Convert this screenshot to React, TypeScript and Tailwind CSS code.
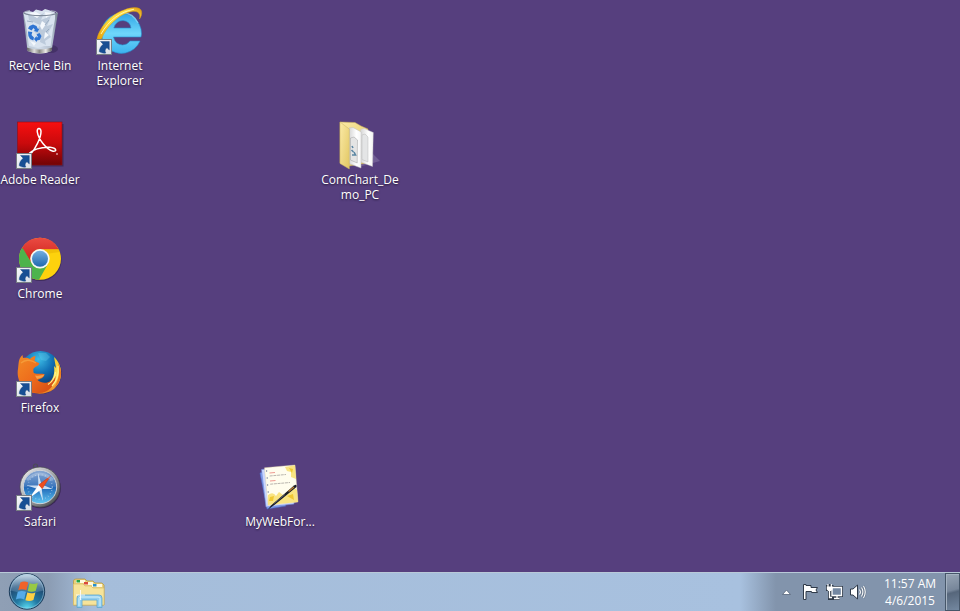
import React from 'react';

type IconProps = { children: React.ReactNode };

const labelFont = "font-['Open_Sans','Noto_Sans',sans-serif]";

function Glyph({ children }: IconProps) {
  return (
    <svg viewBox="0 0 48 48" className="block size-12 shrink-0 overflow-visible" aria-hidden="true">
      {children}
    </svg>
  );
}

function ShortcutBadge() {
  return (
    <g>
      <rect x="0.5" y="32.5" width="15" height="15" fill="url(#badge)" stroke="#777d83" />
      <path d="M4.5 34.5 L13.3 34.5 L13.3 43 L11 40.8 C9 42 8.6 43.8 9.8 46 C7.5 46.6 4.2 45.6 3.2 44.6 C3.4 41.5 4.8 39 7.2 37.2 Z" fill="#174f94" stroke="#123c79" strokeWidth=".4" />
    </g>
  );
}

function SharedDefs() {
  return (
    <svg className="absolute size-0" aria-hidden="true">
      <defs>
        <linearGradient id="badge" x1="0" y1="0" x2="1" y2="1"><stop offset="0" stopColor="#f6f8fa" /><stop offset="1" stopColor="#d6dde6" /></linearGradient>
        <linearGradient id="bin" x1="0" x2="1" y1="0" y2="0"><stop offset="0" stopColor="#8793a3" /><stop offset=".15" stopColor="#bcc8d6" /><stop offset=".5" stopColor="#cfd9e6" /><stop offset=".85" stopColor="#b0bccb" /><stop offset="1" stopColor="#6f7a8a" /></linearGradient>
        <linearGradient id="metal" x1="0" x2="1" y1="0" y2="0"><stop offset="0" stopColor="#5b5a5c" /><stop offset=".3" stopColor="#dedddc" /><stop offset=".5" stopColor="#8a8885" /><stop offset=".75" stopColor="#ecebe8" /><stop offset="1" stopColor="#4f4d4d" /></linearGradient>
        <linearGradient id="ie" x1="0" x2="0" y1="0" y2="1"><stop offset="0" stopColor="#2fa5e6" /><stop offset=".5" stopColor="#6fd6fa" /><stop offset="1" stopColor="#3cb4ef" /></linearGradient>
        <linearGradient id="gold" x1="0" x2="1" y1="1" y2="0"><stop offset="0" stopColor="#e99c05" /><stop offset=".45" stopColor="#ffdf3c" /><stop offset=".8" stopColor="#ffd940" /><stop offset="1" stopColor="#d8900c" /></linearGradient>
        <linearGradient id="adobe" x1="0" x2="0" y1="0" y2="1"><stop offset="0" stopColor="#f80f10" /><stop offset=".5" stopColor="#c90a0c" /><stop offset="1" stopColor="#710305" /></linearGradient>
        <linearGradient id="chromeBlue" x1="0" x2="0" y1="0" y2="1"><stop offset="0" stopColor="#73aee0" /><stop offset="1" stopColor="#1e67ae" /></linearGradient>
        <linearGradient id="chromeRed" x1="0" x2="0" y1="0" y2="1"><stop offset="0" stopColor="#ea4a42" /><stop offset="1" stopColor="#cb1f18" /></linearGradient>
        <radialGradient id="globe" cx=".45" cy=".2" r=".75"><stop offset="0" stopColor="#3dbde6" /><stop offset=".45" stopColor="#1272b6" /><stop offset="1" stopColor="#0a2a62" /></radialGradient>
        <linearGradient id="fox" x1="0" x2="1" y1="0" y2="1"><stop offset="0" stopColor="#f28b25" /><stop offset=".5" stopColor="#ee6c1c" /><stop offset="1" stopColor="#d04712" /></linearGradient>
        <linearGradient id="tail" x1="0" x2="0" y1="0" y2="1"><stop offset="0" stopColor="#f6c429" /><stop offset=".5" stopColor="#fce85e" /><stop offset="1" stopColor="#ee7b1c" /></linearGradient>
        <linearGradient id="chromeRim" x1="0" x2="1" y1="0" y2="1"><stop offset="0" stopColor="#f2f2f2" /><stop offset=".5" stopColor="#a6a8ab" /><stop offset="1" stopColor="#343638" /></linearGradient>
        <linearGradient id="compass" x1="0" x2="0" y1="0" y2="1"><stop offset="0" stopColor="#8aa9d4" /><stop offset=".48" stopColor="#3f78bd" /><stop offset=".52" stopColor="#1f68b8" /><stop offset="1" stopColor="#62c9f4" /></linearGradient>
        <linearGradient id="folder" x1="0" x2="1" y1="0" y2="1"><stop offset="0" stopColor="#fbeaa6" /><stop offset="1" stopColor="#e2c763" /></linearGradient>
        <linearGradient id="page" x1="0" x2="1" y1="0" y2="0"><stop offset="0" stopColor="#d5d5d5" /><stop offset=".6" stopColor="#fff" /><stop offset="1" stopColor="#f4f4f4" /></linearGradient>
      </defs>
    </svg>
  );
}

function RecycleBinIcon() {
  return (
    <Glyph>
      <ellipse cx="35" cy="42" rx="7" ry="4" fill="#2a1f45" opacity=".4" />
      <path d="M7 6 L42 6 L35.5 44 Q24 49 11.5 44 Z" fill="url(#bin)" />
      <path d="M7.5 6 L10 4.5 L13 4 L17 5 L20 2.5 L26 4 L29 2 L34 3.5 L39 5.5 L39 12 L37 22 L34.5 39 L28 39 L22 41 L13 39 L10 18 Z" fill="#d9e3ef" />
      <path d="M12 7 L20 10 L28 6 L25 13 L35 9 L31 19 L37 17 L32 26 L35 30 L29 34 L30 38 L24 35 L25 28 L19 26 L24 18 L13 13 Z" fill="#bccadb" />
      <path d="M13 6 L20 5 L25 8 L21 11 Z M29 5 L36 6 L30 11 Z M26 14 L30 17 L26 23 L24 19 Z M29 25 L33 28 L28 32 Z M14 34 L20 36 L18 39 Z" fill="#f4f8fd" />
      <path d="M11 14 L17 15 M33 13 L29 18 M33 22 L30 25" fill="none" stroke="#94a7be" strokeWidth=".9" />
      <path d="M7.5 6 C14 9.5 35 9.5 41.5 6" fill="none" stroke="#818c9b" strokeWidth="1.3" />
      <path d="M7.5 5.5 Q10 4 14 3.6 M35 3.8 Q40 4 41.5 6" fill="none" stroke="#a8b1bd" strokeWidth="1" />
      <path d="M10.6 40.5 Q23 44.5 36.2 40.5 L35.5 44 Q24 49 11.5 44 Z" fill="url(#metal)" />
      <g fill="#2f74d2"><path d="M13.5 19 L17 17.5 L20.5 19 L22 22 L23.5 21.5 L21.5 25 L17.5 24 L19 23 L17.5 21 L15.5 23.5 L12 21.5 Z" /><path d="M12 24.5 L16.3 25 L15.5 28 L18 30.5 L17.3 33.5 L14 32 L12.4 29 Z" /><path d="M20.5 27.5 L23.5 26 L25.5 29 L24 32.7 L21 33.5 L20.5 35 L18 32 L20.5 29 L20.8 30.5 L22 30 Z" /></g>
    </Glyph>
  );
}

function ExplorerIcon() {
  return (
    <Glyph>
      <path fillRule="evenodd" d="M45.5 27 A20 20 0 1 0 44 34 L34 34 Q31 38 26.5 38 Q19 37.5 17.5 30 L45 30 Z M17.8 21 Q20 13.5 27 13.5 Q34 14 35 21 Z" fill="url(#ie)" stroke="#2592d2" strokeWidth=".6" />
      <path d="M10 20 Q13 8 27 6 Q37 6 42 16" fill="none" stroke="#8adcf9" strokeWidth="1.3" opacity=".8" />
      <path d="M1 34 C1 24 13 8 28 3 C37 -.5 44 -.2 45.5 4 C46.2 7 45 10 43.5 12 C45 7 42 3.5 36 4.5 C23 6.5 10 20 5.5 32 Z" fill="url(#gold)" stroke="#d99a12" strokeWidth=".5" />
      <path d="M5 27 C13 13 24 5 38 2.2" fill="none" stroke="#fff5aa" strokeWidth="1" />
      <ShortcutBadge />
    </Glyph>
  );
}

function AdobeIcon() {
  return (
    <Glyph>
      <rect x="3" y="3" width="44.5" height="42.5" fill="#241334" opacity=".45" />
      <rect x="1.5" y="1" width="44.5" height="43" fill="url(#adobe)" stroke="#8e1015" strokeWidth=".6" />
      <path d="M12.5 33.5 C15 29 26 25.5 34 26.3 C41 27 41 30.8 37 30.2 C30 28.5 22.4 18 21.3 11 C20.6 6.5 25 6.5 25 10.5 C25 17 19 28.5 15 32.5 C13.3 34 12 34.5 12.5 33.5 Z" fill="none" stroke="#fff" strokeWidth="1.5" strokeLinejoin="round" />
      <circle cx="41" cy="33" r=".8" fill="#fff" />
      <ShortcutBadge />
    </Glyph>
  );
}

function ChromeIcon() {
  return (
    <Glyph>
      <circle cx="24.5" cy="25" r="21" fill="#241836" opacity=".45" />
      <circle cx="24" cy="23.8" r="21" fill="#fdd20d" />
      <path d="M5.8 13.3 A21 21 0 0 1 42.7 14.3 L24 14.3 A9.5 9.5 0 0 0 15.8 28.5 Z" fill="url(#chromeRed)" />
      <path d="M5.8 13.3 A21 21 0 0 0 23 44.8 L32.2 28.5 A9.5 9.5 0 0 1 15.8 28.5 L7 13.5 Z" fill="#4db34c" />
      <path d="M24 14.3 L42.7 14.3 L43.5 17 L33 18.5 Z" fill="#e3a800" opacity=".45" />
      <circle cx="24" cy="23.8" r="9.7" fill="#f4f8f7" />
      <circle cx="24" cy="23.8" r="8" fill="url(#chromeBlue)" />
      <ShortcutBadge />
    </Glyph>
  );
}

function FirefoxIcon() {
  return (
    <Glyph>
      <circle cx="24.7" cy="24" r="21" fill="#241836" opacity=".4" />
      <circle cx="24.5" cy="22.5" r="20.5" fill="url(#globe)" />
      <path d="M22 4 L30 4 L34 8 L30 12 L25 11 Z" fill="#6cd4ee" opacity=".3" />
      <path d="M38 8 C47 16 48 31 38 40 C29 47 16 45 10 41 L20 35 C33 38 40 30 38 17 L40 19 Z" fill="url(#tail)" />
      <path d="M42 13 C47 22 46 33 38 39 C43 31 44 22 42 13 Z" fill="#ee7a1d" />
      <path d="M2.5 15 C2.8 11 4 8 6.5 6 L7 9 C10 8.5 12 9 14 10 C15.5 8.3 17.5 7.3 19.5 7 L18.5 12 L23.3 14.2 C23 17 18.5 17.5 17.3 20 L17.5 23.5 C20 26 24 24 28.5 25.2 C28 28.5 25 29.8 21.5 31 C27 36 36 34 39.5 27 C40 37 31 45 21 44 C7 43 0 31 2 20 Z" fill="url(#fox)" />
      <path d="M5 14 Q9 10.5 14 11.5 Q17 12 20 14" fill="none" stroke="#f8ae48" strokeWidth="1.5" opacity=".6" />
      <path d="M21 30 Q27 29 28.5 25.5 Q24 27 19 26.5 Z" fill="#f8a047" />
      <path d="M42 17 Q43.5 29 36 37 M39.5 23 Q39 31 32 35.5" fill="none" stroke="#fff18b" strokeWidth="1.2" />
      <ShortcutBadge />
    </Glyph>
  );
}

function SafariIcon() {
  return (
    <Glyph>
      <circle cx="19.5" cy="3" r="2" fill="none" stroke="#4b4a55" strokeWidth="1.2" />
      <circle cx="24.7" cy="25" r="20.2" fill="#241836" opacity=".6" />
      <circle cx="24" cy="24" r="20" fill="url(#chromeRim)" stroke="#4b4d51" strokeWidth=".7" />
      <circle cx="24" cy="24" r="16.7" fill="url(#compass)" stroke="#cfd4da" strokeWidth="1" />
      <circle cx="24" cy="24" r="12.3" fill="none" stroke="#bdd7ee" strokeWidth="1.4" strokeDasharray=".7 2.6" opacity=".7" />
      <path d="M22.4 22.5 L22 10 L25.5 21.5 L37 26 L25.8 26 L27 38 L22.5 26.2 L11 22.5 Z" fill="#e5f0fa" opacity=".85" />
      <path d="M22.5 22 L34.5 13 L26 26 Z" fill="#ef4e1c" stroke="#c43219" strokeWidth=".5" />
      <path d="M22.5 22 L26 26 L13.5 35 Z" fill="#fff" />
      <path d="M11 17 Q23 5 37 17" fill="none" stroke="#fff" opacity=".25" strokeWidth="3" />
      <ShortcutBadge />
    </Glyph>
  );
}

function FolderIcon() {
  return (
    <Glyph>
      <path d="M23 46 L44 40 L37 33 Z" fill="#ded8ef" opacity=".2" />
      <path d="M4 1 L19 1.5 L25 5 L32 8 L31 42 L13 45 L4 42 Z" fill="url(#folder)" stroke="#c8ad54" strokeWidth=".5" />
      <path d="M24.5 8.5 L28 7.5 L37.3 11.5 L36.5 45.5 L24.5 41 Z" fill="url(#page)" stroke="#c8c8c8" strokeWidth=".4" />
      <path d="M26 14 L29 13 L32 16 L32 41 L26 38.5 Z" fill="#e4e5e6" stroke="#b9b9b9" strokeWidth=".5" />
      <path d="M13 7 L17 6.5 L25.2 11 L25 47 L13 42.5 Z" fill="url(#page)" stroke="#bdbdbd" strokeWidth=".5" />
      <path d="M14.5 17 L18 16 L21.5 19 L21.2 42 L14.5 39 Z" fill="#e4e4e4" stroke="#9e9e9e" strokeWidth=".5" />
      <path d="M16 25 L17 27 M15.5 29 L17.5 31 M18 31 L19.5 34 L16 34" fill="none" stroke="#5b86a3" strokeWidth="1.6" />
      <path d="M4 1 L13.3 8 L13.3 48 L4 42.5 Z" fill="url(#folder)" stroke="#cab362" strokeWidth=".5" />
    </Glyph>
  );
}

function WebFormIcon() {
  return (
    <Glyph>
      <path d="M4 10 L10 8 L30 43 L11 46 Z" fill="#7f9df0" stroke="#4c68bf" strokeWidth=".6" />
      <path d="M5.5 6.5 L35 3 L38 41 L10 44 Z" fill="#c9d6ff" stroke="#6f87d6" strokeWidth=".6" />
      <path d="M8.5 4.8 L39 2 L42 39 L12 42.5 Z" fill="#fffdee" stroke="#ddd0a2" strokeWidth=".4" />
      <path d="M29 4 L39 2.3 L40 16 L35 14 L35 9 L31 8 Z M12 32 Q17 28 20 33 L23 29 L27 32 L37 24 L41 27 L42 39 L12 42 Z" fill="#f7dd66" opacity=".8" />
      <path d="M33 5 L37 6 L36 10 Z M14 34 L18 33 L17 38 L13 38 Z M31 33 L37 31 L38 37 Z" fill="#f0c832" />
      <path d="M13.5 10 L19 9.5 M14 18 L19.5 17.5" stroke="#ee9b92" strokeWidth="1.2" />
      <path d="M13.7 13 L30 11.5 M14.2 21.2 L34 19.5" stroke="#b9b6ae" strokeWidth="1" strokeDasharray="3 .7" />
      <g fill="#6f7a99"><circle cx="10.6" cy="8" r=".7" /><circle cx="11.2" cy="15" r=".7" /><circle cx="11.6" cy="22" r=".7" /><circle cx="12.2" cy="29" r=".7" /></g>
      <path d="M12 46.5 L15 42.5 L38 22.5 Q41 20.5 40.5 24 L19 41.5 Z" fill="#181c27" />
      <path d="M32.5 28.5 L38 24" stroke="#bb7b2d" strokeWidth="1.3" />
      <path d="M18 40.5 L29 31.5" stroke="#6b7282" strokeWidth=".7" />
    </Glyph>
  );
}

type DesktopItem = { label: string; place: string; icon: React.ReactNode };

const items: DesktopItem[] = [
  { label: 'Recycle Bin', place: 'col-start-1 row-start-1', icon: <RecycleBinIcon /> },
  { label: 'Internet Explorer', place: 'col-start-2 row-start-1', icon: <ExplorerIcon /> },
  { label: 'Adobe Reader', place: 'col-start-1 row-start-2', icon: <AdobeIcon /> },
  { label: 'ComChart_Demo_PC', place: 'col-start-5 row-start-2', icon: <FolderIcon /> },
  { label: 'Chrome', place: 'col-start-1 row-start-3', icon: <ChromeIcon /> },
  { label: 'Firefox', place: 'col-start-1 row-start-4', icon: <FirefoxIcon /> },
  { label: 'Safari', place: 'col-start-1 row-start-5', icon: <SafariIcon /> },
  { label: 'MyWebFor...', place: 'col-start-4 row-start-5', icon: <WebFormIcon /> },
];

function StartOrb() {
  return (
    <svg viewBox="0 0 38 38" className="block size-[38px]" aria-hidden="true">
      <defs>
        <radialGradient id="orb" cx=".5" cy="1" r=".95"><stop offset="0" stopColor="#5de3f7" /><stop offset=".35" stopColor="#247ba4" /><stop offset=".75" stopColor="#1f4a72" /><stop offset="1" stopColor="#56799c" /></radialGradient>
        <linearGradient id="orbShine" x1="0" x2="0" y1="0" y2="1"><stop offset="0" stopColor="#e0edf6" stopOpacity=".85" /><stop offset="1" stopColor="#7da5c5" stopOpacity=".25" /></linearGradient>
      </defs>
      <circle cx="19" cy="18.5" r="17.7" fill="url(#orb)" stroke="#1d3d5c" strokeWidth="1" />
      <path d="M2.5 17.5 A16.5 16.5 0 0 1 35.5 17.5 Q19 22.5 2.5 17.5" fill="url(#orbShine)" />
      <circle cx="19" cy="18.5" r="16.6" fill="none" stroke="#a3cbe1" strokeOpacity=".55" />
      <path d="M12.4 9.6 Q16 7.4 20.2 9.6 L18.4 17.3 Q14.2 15.4 10.2 17.3 Z" fill="#f0622a" />
      <path d="M21.6 10.3 Q25.6 12 29.8 10 L27.8 17.8 Q23.8 19.7 19.7 18 Z" fill="#98c944" />
      <path d="M9.8 18.8 Q13.8 17 18 18.8 L16.2 26.4 Q12 24.5 7.9 26.4 Z" fill="#55abe8" />
      <path d="M19.3 19.5 Q23.2 21.2 27.4 19.4 L25.4 27 Q21.4 28.9 17.4 27.2 Z" fill="#ffd044" />
    </svg>
  );
}

function LibraryIcon() {
  return (
    <svg viewBox="0 0 34 32" className="block h-8 w-[34px]" aria-hidden="true">
      <path d="M1.5 27 V3 Q1.5 1 4 1 H13 L15 3 H21 L23 5 H30 L32 7 V27 Z" fill="#ecd27c" stroke="#b99a45" strokeWidth=".8" />
      <path d="M4 2 H13 V5 H4 Z M12 4 H21 V7 H12 Z M20 6 H30 V9 H20 Z" fill="#fff9df" />
      <path d="M4.5 2 H8 V4.5 H4.5 Z" fill="#28a443" /><path d="M12 4 H16 V6.5 H12 Z" fill="#da483b" /><path d="M21 6 H24.5 V8.5 H21 Z" fill="#2790cb" />
      <path d="M1.5 6 H11 L13 8 H19 L21 10 H32 V27 H1.5 Z" fill="#f6e39a" stroke="#d9bd6b" strokeWidth=".7" />
      <path d="M5 29.5 V20 Q5 17 8 17 H27 Q30 17 30 20 V29.5 H25 V22 H10 V29.5 Z" fill="#93cfee" stroke="#5ca6d0" strokeWidth=".8" />
      <path d="M7 28 V20.5 Q7 19 9 19 H26 Q28 19 28 20.5 V28" fill="none" stroke="#d3f1fc" strokeWidth="1" />
      <path d="M8.5 12 V22 M4 17 H13" stroke="#fff" strokeWidth="1" opacity=".85" />
    </svg>
  );
}

function Taskbar() {
  return (
    <footer className={`flex h-[39px] shrink-0 items-stretch border-t border-[#b9c9d8] bg-[linear-gradient(90deg,#8f9fb5_0,#8b9cb3_48px,#a5bdda_92px,#a8c1df_calc(100%_-_220px),#8294ac_calc(100%_-_184px),#8294ac_100%)] ${labelFont}`}>
      <button type="button" aria-label="Start" className="ml-2 flex w-[38px] items-center"><StartOrb /></button>
      <button type="button" aria-label="Windows Explorer" className="ml-[26px] flex w-[34px] items-center pt-1"><LibraryIcon /></button>
      <div className="ml-auto flex items-center text-white">
        <button type="button" aria-label="Show hidden icons" className="flex size-4 items-center justify-center">
          <svg viewBox="0 0 16 16" className="block size-4" aria-hidden="true"><path d="M4.5 10.5 L8.5 6 L12.5 10.5 Z" fill="#fff" stroke="#56657a" strokeWidth=".8" /></svg>
        </button>
        <button type="button" aria-label="Action Center" className="ml-2">
          <svg viewBox="0 0 16 16" className="block size-4 overflow-visible" aria-hidden="true"><path d="M1.5 .5 H4 V1.5 H9 V3.5 H15.5 L14 6 L15.5 8.5 H9.5 V7.5 H4 V15.5 H1.5 Z" fill="#fff" stroke="#2f3a49" strokeWidth="1" /></svg>
        </button>
        <button type="button" aria-label="Network" className="ml-2">
          <svg viewBox="0 0 16 16" className="block size-4 overflow-visible" aria-hidden="true">
            <path d="M6 3.5 H15.5 V11.5 H6 Z M8 14.5 H13.5 M11 12 V14" fill="none" stroke="#2f3a49" strokeWidth="3" />
            <path d="M3.5 6 V14.5 H8 M1.5 1 V5.5 H6 V1 M3.8 0 V4" fill="none" stroke="#2f3a49" strokeWidth="3" />
            <path d="M6 3.5 H15.5 V11.5 H6 Z" fill="#7488a2" stroke="#fff" strokeWidth="1.3" />
            <path d="M8 14.5 H13.5 M11 12 V14 M3.5 6 V13.5 H6" fill="none" stroke="#fff" strokeWidth="1.3" />
            <path d="M.8 2.5 H6.5 V5.5 L5 7 H2.3 L.8 5.5 Z M1.4 0 H2.6 V3 H1.4 Z M4.7 0 H5.9 V3 H4.7 Z" fill="#fff" />
          </svg>
        </button>
        <button type="button" aria-label="Volume" className="ml-2">
          <svg viewBox="0 0 16 16" className="block size-4 overflow-visible" aria-hidden="true"><path d="M.5 5 H3 L7.5 1 V15 L3 11 H.5 Z" fill="#fff" stroke="#2f3a49" strokeWidth="1" /><path d="M9.5 5.5 Q11.3 8 9.5 10.5 M11.5 3.5 Q14.3 8 11.5 12.5 M13.5 2 Q17 8 13.5 14" fill="none" stroke="#4d5b6e" strokeWidth="2.2" opacity=".6" /><path d="M9.5 5.5 Q11.3 8 9.5 10.5 M11.5 3.5 Q14.3 8 11.5 12.5 M13.5 2 Q17 8 13.5 14" fill="none" stroke="#fff" strokeWidth="1.1" /></svg>
        </button>
        <time className="ml-[13px] flex w-[62px] flex-col text-center text-xs leading-[17px] whitespace-nowrap"><span>11:57 AM</span><span>4/6/2015</span></time>
        <button type="button" aria-label="Show desktop" className="ml-1 h-full w-[15px] border border-[#465669] bg-[linear-gradient(165deg,#98a5b5_0,#77869a_45%,#56667b_52%,#7488a0_100%)] shadow-[inset_1px_1px_0_#a5b2c1]" />
      </div>
    </footer>
  );
}

export default function App() {
  return (
    <div className="flex min-h-screen flex-col bg-[#563f7e]">
      <SharedDefs />
      <main className={`grid flex-1 auto-cols-[80px] auto-rows-[114px] content-start justify-start overflow-hidden ${labelFont}`}>
        {items.map((item) => (
          <button key={item.label} type="button" className={`flex flex-col items-center pt-[7px] text-xs leading-[15px] text-white ${item.place}`}>
            {item.icon}
            <span className="mt-[3px] max-w-full text-center break-words [text-shadow:0_1px_2px_#241836]">{item.label}</span>
          </button>
        ))}
      </main>
      <Taskbar />
    </div>
  );
}
